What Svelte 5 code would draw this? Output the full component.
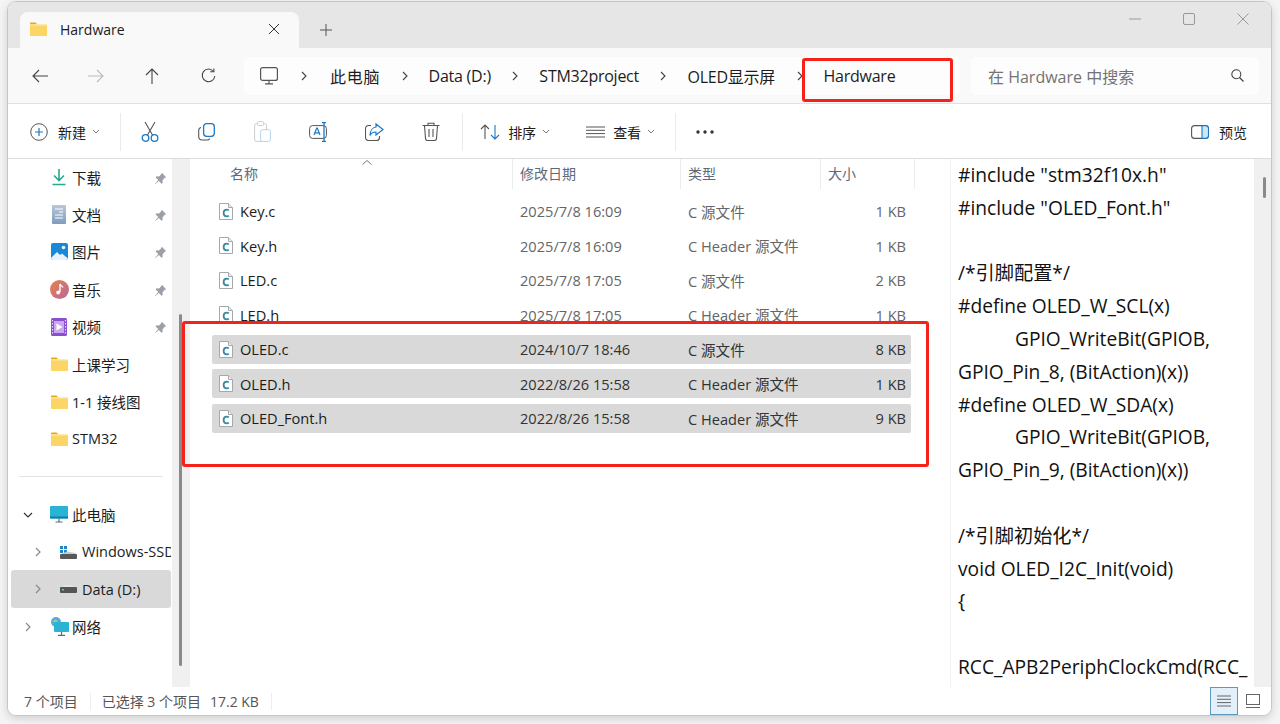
<script>
  const quick = [
    { label: '下载', icon: 'download' },
    { label: '文档', icon: 'doc' },
    { label: '图片', icon: 'pic' },
    { label: '音乐', icon: 'music' },
    { label: '视频', icon: 'video' },
    { label: '上课学习', icon: 'folder' },
    { label: '1-1 接线图', icon: 'folder' },
    { label: 'STM32', icon: 'folder' },
  ]
  const crumbs = ['此电脑', 'Data (D:)', 'STM32project', 'OLED显示屏', 'Hardware']
  const files = [
    ['Key.c', '2025/7/8 16:09', 'C 源文件', '1 KB', false],
    ['Key.h', '2025/7/8 16:09', 'C Header 源文件', '1 KB', false],
    ['LED.c', '2025/7/8 17:05', 'C 源文件', '2 KB', false],
    ['LED.h', '2025/7/8 17:05', 'C Header 源文件', '1 KB', false],
    ['OLED.c', '2024/10/7 18:46', 'C 源文件', '8 KB', true],
    ['OLED.h', '2022/8/26 15:58', 'C Header 源文件', '1 KB', true],
    ['OLED_Font.h', '2022/8/26 15:58', 'C Header 源文件', '9 KB', true],
  ]
  const preview = [
    '#include "stm32f10x.h"',
    '#include "OLED_Font.h"',
    '',
    '/*引脚配置*/',
    '#define OLED_W_SCL(x)',
    '\tGPIO_WriteBit(GPIOB,',
    'GPIO_Pin_8, (BitAction)(x))',
    '#define OLED_W_SDA(x)',
    '\tGPIO_WriteBit(GPIOB,',
    'GPIO_Pin_9, (BitAction)(x))',
    '',
    '/*引脚初始化*/',
    'void OLED_I2C_Init(void)',
    '{',
    '',
    'RCC_APB2PeriphClockCmd(RCC_',
  ]
</script>

{#snippet folder(w = 17, h = 14)}
  <svg width={w} height={h} viewBox="0 0 17 14">
    <path d="M0 1.500a1 1 0 0 1 1-1h4.500l2 2H0z" fill="#e8a90e" />
    <rect x="0" y="2.500" width="17" height="11.500" rx="1" fill="#fbd566" />
    <rect x="0" y="2.500" width="17" height="1" fill="#fde9a8" />
  </svg>
{/snippet}

{#snippet caret()}
  <svg class="caret" width="8" height="5" viewBox="0 0 8 5"><path d="M1 1l3 3 3-3" fill="none" stroke="#777" /></svg>
{/snippet}

{#snippet chevron(open = false)}
  <svg width="10" height="10" viewBox="0 0 10 10">
    {#if open}
      <path d="M1 3l4 4 4-4" fill="none" stroke="#333" stroke-width="1.200" />
    {:else}
      <path d="M3 1l4 4-4 4" fill="none" stroke="#8a8a8a" stroke-width="1.200" />
    {/if}
  </svg>
{/snippet}

{#snippet sep()}
  <svg class="crumb-sep" width="8" height="10" viewBox="0 0 8 10"><path d="M2 1l4 4-4 4" fill="none" stroke="#444" stroke-width="1.100" /></svg>
{/snippet}

{#snippet fileIcon()}
  <svg width="14" height="17" viewBox="0 0 14 17">
    <path d="M.5.5h9l4 4v12H.5z" fill="#fff" stroke="#a4a9ad" />
    <path d="M9.500.5v4h4" fill="#eee" stroke="#a4a9ad" />
    <path d="M9.800 7.400a3 3 0 0 0-2-.8c-2 0-3.200 1.500-3.200 3.400s1.200 3.300 3.200 3.300a3 3 0 0 0 2-.6" fill="none" stroke="#3a8aa6" stroke-width="1.800" />
  </svg>
{/snippet}

{#snippet quickIcon(name)}
  {#if name === 'download'}
    <svg width="16" height="18" viewBox="0 0 16 18"><path d="M8 1v11M3 7.500L8 12.500l5-5" fill="none" stroke="#2aa88d" stroke-width="1.600" /><path d="M1.500 16.500h13" stroke="#2aa88d" stroke-width="1.600" /></svg>
  {:else if name === 'doc'}
    <svg width="14" height="19" viewBox="0 0 14 19"><defs><linearGradient id="dg" x1="0" y1="0" x2="0" y2="1"><stop offset="0" stop-color="#b9c8da" /><stop offset="1" stop-color="#7f9cbd" /></linearGradient></defs><rect width="14" height="19" rx="1" fill="url(#dg)" /><path d="M3 4h8M7 7h4M3 10h8M3 13h8" stroke="#fff" /></svg>
  {:else if name === 'pic'}
    <svg width="17" height="17" viewBox="0 0 17 17"><rect width="17" height="17" rx="2" fill="#1a88d8" /><path d="M0 15l6-6 3 3 2-1.500 6 5V15a2 2 0 0 1-2 2H2a2 2 0 0 1-2-2z" fill="#e6f3fc" /><circle cx="12.500" cy="4.500" r="1.800" fill="#e6f3fc" /></svg>
  {:else if name === 'music'}
    <svg width="19" height="19" viewBox="0 0 19 19"><defs><linearGradient id="mg" x1="0" y1="0" x2="1" y2="1"><stop offset="0" stop-color="#ea7f4a" /><stop offset="1" stop-color="#b56a9c" /></linearGradient></defs><circle cx="9.500" cy="9.500" r="9.500" fill="url(#mg)" /><path d="M10 4v8" stroke="#fff" stroke-width="1.400" /><circle cx="8.200" cy="12.500" r="1.900" fill="#fff" /><path d="M10 4c.5 2 2.500 2 3 3.500" fill="none" stroke="#fff" stroke-width="1.200" /></svg>
  {:else if name === 'video'}
    <svg width="16" height="18" viewBox="0 0 16 18"><rect width="16" height="18" rx="1.500" fill="#8a4fd0" /><rect x="3" y="3" width="10" height="12" fill="#c9a8ee" /><path d="M5.500 5.500l6 3.500-6 3.500z" fill="#fff" /><path d="M1.500 2v14M14.500 2v14" stroke="#e5d5f7" stroke-width="1.200" stroke-dasharray="1.400 1.600" /></svg>
  {:else}
    {@render folder()}
  {/if}
{/snippet}

{#snippet pin()}
  <svg class="pin" width="13" height="13" viewBox="0 0 13 13"><path d="M7.800.8l4.400 4.400-1.500.6-2.200 2.600.2 2.400-1.300 1-2.500-2.700L1.300 12 1 11.700l3.300-3.600L1.600 5.600l1-1.300 2.400.2 2.200-2.200z" fill="#9aa0a6" /></svg>
{/snippet}

<div class="desktop">
  <div class="window">
    <header class="titlebar">
      <div class="tab">
        {@render folder()}
        <span class="tab-title">Hardware</span>
        <svg width="12" height="12" viewBox="0 0 12 12"><path d="M1 1l10 10M11 1L1 11" stroke="#333" /></svg>
      </div>
      <svg class="tab-add" width="12" height="12" viewBox="0 0 12 12"><path d="M6 0v12M0 6h12" stroke="#555" /></svg>
      <div class="winbtns">
        <svg width="12" height="12" viewBox="0 0 12 12"><path d="M0 6h12" stroke="#999" /></svg>
        <svg width="12" height="12" viewBox="0 0 12 12"><rect x=".5" y=".5" width="11" height="11" rx="1.500" fill="none" stroke="#999" /></svg>
        <svg width="12" height="12" viewBox="0 0 12 12"><path d="M.5.5l11 11M11.500.5l-11 11" stroke="#999" /></svg>
      </div>
    </header>

    <nav class="navbar">
      <div class="navbtns">
        <svg width="16" height="14" viewBox="0 0 16 14"><path d="M7 1L1 7l6 6M1 7h15" fill="none" stroke="#444" stroke-width="1.100" /></svg>
        <svg width="16" height="14" viewBox="0 0 16 14"><path d="M9 1l6 6-6 6M15 7H0" fill="none" stroke="#bbb" stroke-width="1.100" /></svg>
        <svg width="14" height="16" viewBox="0 0 14 16"><path d="M1 7l6-6 6 6M7 1v15" fill="none" stroke="#444" stroke-width="1.100" /></svg>
        <svg width="15" height="15" viewBox="0 0 15 15"><path d="M12.500 3.500A6.300 6.300 0 1 0 13.800 8" fill="none" stroke="#444" stroke-width="1.100" /><path d="M9.200 3.700h3.700V.5" fill="none" stroke="#444" stroke-width="1.100" /></svg>
      </div>
      <div class="crumbs">
        <svg class="pc" width="18" height="18" viewBox="0 0 18 18"><rect x=".6" y=".6" width="16.800" height="12.800" rx="2" fill="none" stroke="#555" stroke-width="1.200" /><path d="M9 13.500v3M5 16.800h8" stroke="#555" stroke-width="1.200" /></svg>
        {#each crumbs as c, i}
          {@render sep()}
          <span class="crumb" class:root={i === 0}>{c}</span>
        {/each}
      </div>
      <div class="search">
        <span>在 Hardware 中搜索</span>
        <svg width="13" height="13" viewBox="0 0 13 13"><circle cx="5.300" cy="5.300" r="4.500" fill="none" stroke="#444" stroke-width="1.100" /><path d="M8.500 8.500l4 4" stroke="#444" stroke-width="1.200" /></svg>
      </div>
    </nav>

    <div class="cmdbar">
      <div class="cmd new">
        <svg class="plus" width="18" height="18" viewBox="0 0 18 18"><circle cx="9" cy="9" r="8.300" fill="none" stroke="#555" /><path d="M9 5v8M5 9h8" stroke="#1b78c4" stroke-width="1.200" /></svg>
        <span>新建</span>
        {@render caret()}
      </div>
      <i class="vr"></i>
      <div class="tools">
        <svg width="18" height="20" viewBox="0 0 18 20"><path d="M4 0l7.500 13M14 0L6.500 13" stroke="#555" stroke-width="1.100" /><circle cx="4.500" cy="16" r="3.300" fill="none" stroke="#1b78c4" stroke-width="1.300" /><circle cx="13.500" cy="16" r="3.300" fill="none" stroke="#1b78c4" stroke-width="1.300" /></svg>
        <svg width="17" height="18" viewBox="0 0 17 18"><rect x="5.600" y=".7" width="10.700" height="12.600" rx="3" fill="none" stroke="#1b78c4" stroke-width="1.300" /><path d="M3 4.500A3 3 0 0 0 .7 7.500v6a3.500 3.500 0 0 0 3.500 3.500h5a3 3 0 0 0 2.600-1.600" fill="none" stroke="#555" stroke-width="1.100" /></svg>
        <svg width="17" height="21" viewBox="0 0 17 21"><rect x=".6" y="2.600" width="12" height="17.800" rx="2" fill="none" stroke="#ccc" /><rect x="3.500" y=".6" width="6" height="4" rx="1" fill="#fff" stroke="#ccc" /><rect x="6.600" y="8.600" width="9.800" height="11.800" rx="2" fill="#fff" stroke="#b5d5ee" /></svg>
        <svg width="20" height="20" viewBox="0 0 20 20"><rect x=".6" y="3.600" width="16.800" height="12.800" rx="3" fill="none" stroke="#555" /><path d="M5 13l2.700-7h.6L11 13M6 10.800h4" fill="none" stroke="#1b78c4" stroke-width="1.200" /><path d="M13 .7h4M13 19.300h4M15 .7v18.600" stroke="#1b78c4" stroke-width="1.300" fill="none" /></svg>
        <svg width="19" height="18" viewBox="0 0 19 18"><path d="M6 2.500H3.500a3 3 0 0 0-3 3v9a3 3 0 0 0 3 3h8a3 3 0 0 0 3-3V13" fill="none" stroke="#555" stroke-width="1.100" /><path d="M11 1l7 5.500-7 5.500V9c-3 0-5 1-6 3.500C5 8 7.500 4.500 11 4z" fill="none" stroke="#1b78c4" stroke-width="1.200" /></svg>
        <svg width="18" height="19" viewBox="0 0 18 19"><path d="M.5 3.500h17M6 3.500V1.200h6v2.300M2.500 3.500l1 13a2 2 0 0 0 2 2h7a2 2 0 0 0 2-2l1-13M7 7v8M11 7v8" fill="none" stroke="#555" stroke-width="1.100" /></svg>
      </div>
      <i class="vr"></i>
      <div class="cmd sort">
        <svg width="20" height="16" viewBox="0 0 20 16"><path d="M1 5l4-4 4 4M5 1v14" fill="none" stroke="#555" stroke-width="1.100" /><path d="M11 11l4 4 4-4M15 15V1" fill="none" stroke="#1b78c4" stroke-width="1.100" /></svg>
        <span>排序</span>
        {@render caret()}
      </div>
      <div class="cmd view">
        <svg width="19" height="12" viewBox="0 0 19 12"><path d="M0 1h19M0 4.300h19M0 7.600h19M0 11h19" stroke="#555" /></svg>
        <span>查看</span>
        {@render caret()}
      </div>
      <i class="vr"></i>
      <svg class="dots" width="18" height="4" viewBox="0 0 18 4"><circle cx="2" cy="2" r="1.700" fill="#333" /><circle cx="9" cy="2" r="1.700" fill="#333" /><circle cx="16" cy="2" r="1.700" fill="#333" /></svg>
      <div class="cmd preview-btn">
        <svg width="18" height="14" viewBox="0 0 18 14"><rect x=".6" y=".6" width="16.800" height="12.800" rx="3" fill="none" stroke="#555" stroke-width="1.100" /><path d="M11 .6h3.500a3 3 0 0 1 3 3v6.800a3 3 0 0 1-3 3H11z" fill="#cfe5f6" stroke="#1b78c4" stroke-width="1.100" /></svg>
        <span>预览</span>
      </div>
    </div>

    <div class="body">
      <aside class="sidebar">
        {#each quick as q}
          <div class="side-row">
            <span class="side-icon">{@render quickIcon(q.icon)}</span>
            <span>{q.label}</span>
            {#if q.icon !== 'folder'}{@render pin()}{/if}
          </div>
        {/each}
        <hr />
        <div class="side-row">
          <span class="twist">{@render chevron(true)}</span>
          <span class="side-icon">
            <svg width="18" height="17" viewBox="0 0 18 17"><rect width="18" height="12.500" rx="1" fill="#29b4d6" /><rect y="10.500" width="18" height="2" fill="#0f7ea8" /><path d="M9 12.500v3M5.500 16h7" stroke="#5b6a75" stroke-width="1.200" /></svg>
          </span>
          <span>此电脑</span>
        </div>
        <div class="side-row sub">
          <span class="twist">{@render chevron()}</span>
          <span class="drive">
            <svg width="18" height="14" viewBox="0 0 18 14"><path d="M1 1h3v3H1zM5 1h3v3H5zM1 5h3v3H1zM5 5h3v3H5z" fill="#1b86c8" /><path d="M8 6.500l8 1.500 2 1.500H1z" fill="#c9c9c9" /><rect x="1" y="9" width="17" height="5" rx="1" fill="#585858" /></svg>
          </span>
          <span class="clip">Windows-SSD (C:)</span>
        </div>
        <div class="side-row sub active">
          <span class="twist">{@render chevron()}</span>
          <span class="drive">
            <svg width="18" height="14" viewBox="0 0 18 14"><path d="M3 5l3-2h6l3 2z" fill="#e4e4e4" /><rect x="1" y="5" width="17" height="6" rx="1" fill="#555" /><rect x="3" y="7" width="2" height="1.500" fill="#5fd07a" /></svg>
          </span>
          <span>Data (D:)</span>
        </div>
        <div class="side-row">
          <span class="twist">{@render chevron()}</span>
          <span class="side-icon">
            <svg width="19" height="19" viewBox="0 0 19 19"><circle cx="6" cy="5" r="5" fill="#5aa9d8" /><path d="M3 4l3-2 2 3-3 2z" fill="#8fd08a" /><rect x="4" y="5" width="15" height="10" rx="1" fill="#29b4d6" /><path d="M11.500 15v3M8 18.400h7" stroke="#5b6a75" stroke-width="1.200" /></svg>
          </span>
          <span>网络</span>
        </div>
      </aside>
      <div class="track left"><i></i></div>

      <section class="list">
        <div class="head">
          <span class="col-name">名称</span>
          <span>修改日期</span>
          <span>类型</span>
          <span>大小</span>
          <svg class="sort-arrow" width="10" height="5" viewBox="0 0 10 5"><path d="M.5 4.500L5 .5l4.500 4" fill="none" stroke="#777" /></svg>
        </div>
        <div class="rows">
          {#each files as [name, date, type, size, sel]}
            <div class="row" class:sel>
              <span class="name">{@render fileIcon()}<span>{name}</span></span>
              <span>{date}</span>
              <span>{type}</span>
              <span class="size">{size}</span>
            </div>
          {/each}
        </div>
      </section>

      <section class="preview">
        {#each preview as line}
          <div class="line" class:indent={line.startsWith('\t')}>{line.trim() || '\u00a0'}</div>
        {/each}
      </section>
      <div class="track right"><i></i></div>
    </div>

    <footer class="status">
      <span>7 个项目</span>
      <i class="st-sep"></i>
      <span>已选择 3 个项目</span>
      <span class="st-size">17.2 KB</span>
      <i class="st-sep"></i>
      <div class="viewbtns">
        <span class="details">
          <svg width="14" height="12" viewBox="0 0 14 12"><path d="M0 1h14M0 4.300h14M0 7.600h14M0 11h14" stroke="#666" /></svg>
        </span>
        <svg width="14" height="14" viewBox="0 0 14 14"><rect x=".5" y=".5" width="13" height="10" fill="none" stroke="#666" /><path d="M0 13.500h14" stroke="#666" /></svg>
      </div>
    </footer>
  </div>

  <i class="mark mark-crumb"></i>
  <i class="mark mark-files"></i>
</div>

<style>
  :global(body) {
    margin: 0;
    background: #f4f4f4;
  }
  .desktop {
    position: relative;
    width: 1280px;
    height: 724px;
    box-sizing: border-box;
    padding: 1px 8px 8px 7px;
    overflow: hidden;
    font-family: "Open Sans", "Noto Sans CJK SC", sans-serif;
    font-size: 14px;
    color: #1c1c1c;
  }
  .window {
    display: flex;
    flex-direction: column;
    height: 100%;
    background: #fff;
    border: 1px solid #c6c6c6;
    border-radius: 9px;
    box-sizing: border-box;
    overflow: hidden;
    box-shadow: 0 3px 8px rgba(0, 0, 0, 0.14);
  }

  .titlebar {
    display: flex;
    align-items: flex-end;
    flex: none;
    height: 46px;
    padding-left: 12px;
    background: #e6e6e6;
  }
  .tab {
    display: flex;
    align-items: center;
    width: 279px;
    height: 36px;
    box-sizing: border-box;
    padding: 0 19px 2px 10px;
    background: #f9f9f9;
    border-radius: 8px 8px 0 0;
  }
  .tab-title {
    flex: 1;
    margin-left: 13px;
  }
  .tab-add {
    margin: 0 0 12px 21px;
  }
  .winbtns {
    display: flex;
    gap: 42px;
    margin: 0 22px 0 auto;
    align-self: flex-start;
    padding-top: 11px;
  }

  .navbar {
    display: flex;
    align-items: center;
    flex: none;
    height: 56px;
    box-sizing: border-box;
    background: #f9f9f9;
    border-bottom: 1px solid #e1e1e1;
  }
  .navbtns {
    display: grid;
    grid-template-columns: repeat(4, 56px);
    justify-items: center;
    align-items: center;
    width: 236px;
    padding-left: 4px;
    box-sizing: border-box;
  }
  .crumbs {
    display: flex;
    align-items: center;
    width: 716px;
    height: 38px;
    box-sizing: border-box;
    padding-left: 16px;
    background: #fdfdfd;
    border-radius: 5px;
    font-size: 16px;
    white-space: nowrap;
  }
  .pc {
    margin-right: 22px;
  }
  .crumb-sep {
    flex: none;
  }
  .crumb {
    margin: 0 20.500px 0 20px;
    letter-spacing: -0.25px;
  }
  .crumb.root {
    margin-left: 22px;
    letter-spacing: 0.7px;
  }
  .search {
    display: flex;
    align-items: center;
    justify-content: space-between;
    width: 288px;
    height: 38px;
    box-sizing: border-box;
    margin-left: 11px;
    padding: 0 15px 0 17px;
    background: #fdfdfd;
    border-radius: 5px;
    font-size: 16px;
    color: #737373;
  }

  .cmdbar {
    display: flex;
    align-items: center;
    flex: none;
    height: 55px;
    box-sizing: border-box;
    padding: 1px 0 0 22px;
    background: #fff;
    border-bottom: 1px solid #dcdcdc;
  }
  .cmd {
    display: flex;
    align-items: center;
    gap: 8px;
    white-space: nowrap;
  }
  .new {
    width: 90px;
  }
  .plus {
    margin-right: 2px;
  }
  .caret {
    margin-left: -2px;
  }
  .vr {
    display: block;
    flex: none;
    width: 1px;
    height: 38px;
    background: #ebebeb;
  }
  .tools {
    display: grid;
    grid-template-columns: repeat(6, 56.200px);
    justify-items: center;
    align-items: center;
    margin: 0 3px 0 1px;
  }
  .sort {
    margin-left: 17px;
    width: 106px;
  }
  .view {
    width: 89px;
  }
  .dots {
    margin-left: 20px;
  }
  .preview-btn {
    margin-left: auto;
    margin-right: 24px;
    gap: 10px;
  }

  .body {
    display: flex;
    flex: 1;
    min-height: 0;
  }
  .sidebar {
    flex: none;
    width: 164px;
    box-sizing: border-box;
    padding: 0 1px 0 3px;
    overflow: hidden;
    font-size: 14.500px;
  }
  .side-row {
    display: flex;
    align-items: center;
    position: relative;
    height: 37.400px;
    white-space: nowrap;
    padding-left: 37px;
    box-sizing: border-box;
  }
  .side-row:first-child {
    margin-top: -0.500px;
  }
  .side-icon {
    display: flex;
    justify-content: center;
    flex: none;
    width: 22px;
    margin-right: 2px;
  }
  .pin {
    position: absolute;
    right: 4px;
    top: 13px;
  }
  .twist {
    position: absolute;
    left: 12px;
    top: 14px;
    display: flex;
  }
  .sub {
    padding-left: 48px;
  }
  .sub .twist {
    left: 22px;
  }
  .drive {
    display: flex;
    flex: none;
    width: 23px;
  }
  .clip {
    overflow: hidden;
  }
  .active {
    background: #d9d9d9;
    border-radius: 3px;
  }
  hr {
    margin: 18.500px 8px;
    border: 0;
    border-top: 1px solid #e2e2e2;
    height: 0;
  }

  .track {
    flex: none;
    position: relative;
    width: 18px;
    background: #f0f0f0;
  }
  .track i {
    position: absolute;
    display: block;
    width: 3px;
    background: #8a8a8a;
    border-radius: 2px;
  }
  .track.left i {
    left: 7px;
    top: 155px;
    height: 352px;
  }
  .track.right i {
    left: 9px;
    top: 18px;
    height: 21px;
  }

  .list {
    flex: none;
    width: 760px;
    overflow: hidden;
  }
  .head {
    position: relative;
    display: grid;
    grid-template-columns: 323px 168px 140px 94px;
    height: 30px;
    color: #5c6a7c;
    line-height: 30px;
  }
  .head span {
    padding-left: 7px;
    border-right: 1px solid #ececec;
  }
  .head .col-name {
    padding-left: 40px;
  }
  .sort-arrow {
    position: absolute;
    left: 172px;
    top: 1px;
  }
  .rows {
    display: flex;
    flex-direction: column;
    gap: 5.500px;
    width: 699px;
    margin: 7.500px 0 0 22px;
    font-size: 14.600px;
  }
  .row {
    display: grid;
    grid-template-columns: 301px 168px 140px 90px;
    align-items: center;
    flex: none;
    height: 29px;
    border-radius: 2px;
    color: #666;
    white-space: nowrap;
  }
  .row > span:not(.name) {
    padding-left: 7px;
  }
  .row .size {
    text-align: right;
    padding: 0 5px 0 0;
  }
  .name {
    display: flex;
    align-items: center;
    gap: 7px;
    padding-left: 7px;
    color: #1c1c1c;
  }
  .sel {
    background: #d9d9d9;
    color: #333;
  }

  .preview {
    flex: none;
    width: 304px;
    overflow: hidden;
    box-sizing: border-box;
    padding-left: 7px;
    border-left: 1px solid #f1f1f1;
    font-size: 19.200px;
    line-height: 32.800px;
    color: #111;
    white-space: nowrap;
  }
  .line {
    height: 32.800px;
  }
  .indent {
    padding-left: 57px;
  }

  .status {
    display: flex;
    align-items: center;
    flex: none;
    height: 28px;
    padding-left: 16px;
    color: #555;
    background: #fff;
  }
  .st-sep {
    display: block;
    width: 1px;
    height: 17px;
    margin: 0 11px 0 12px;
    background: #eee;
  }
  .st-size {
    margin-left: 9px;
  }
  .viewbtns {
    display: flex;
    align-items: center;
    margin-left: auto;
    gap: 8px;
    padding-right: 11px;
  }
  .details {
    display: flex;
    align-items: center;
    justify-content: center;
    width: 28px;
    height: 28px;
    box-sizing: border-box;
    background: #e3f0fa;
    border: 1px solid #5e98bd;
  }

  .mark {
    position: absolute;
    display: block;
    box-sizing: border-box;
    border: 3px solid #f5211b;
    border-radius: 3px;
  }
  .mark-crumb {
    left: 802px;
    top: 58px;
    width: 151px;
    height: 44px;
  }
  .mark-files {
    left: 182px;
    top: 321px;
    width: 747px;
    height: 146px;
  }
</style>
